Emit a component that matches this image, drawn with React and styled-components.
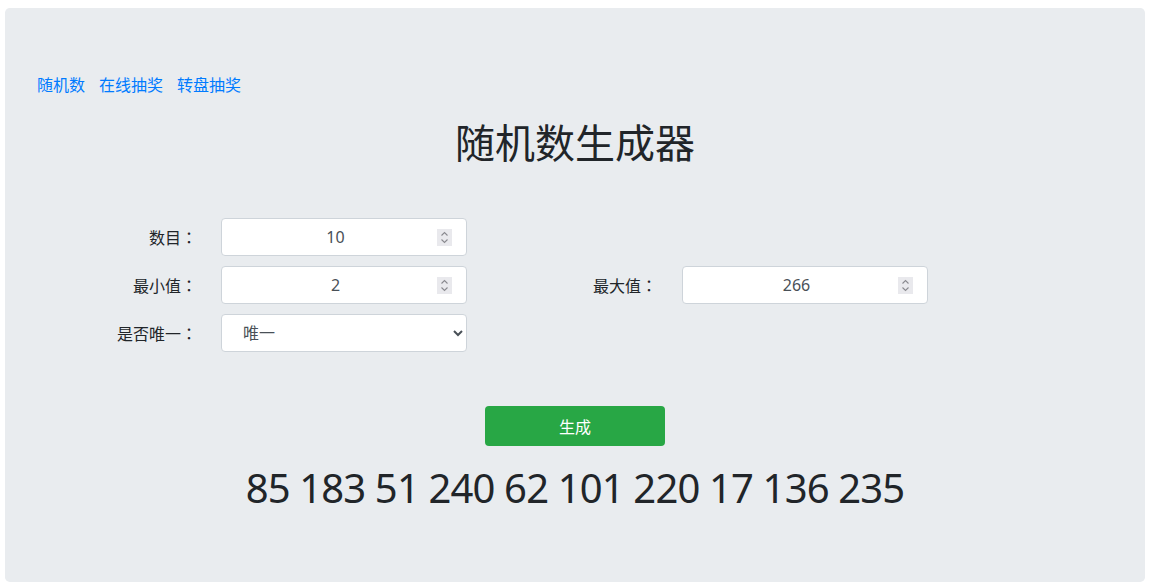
import React from "react";
import styled, { createGlobalStyle } from "styled-components";

const Global = createGlobalStyle`
  html, body { margin: 0; padding: 0; background: #fff; }
  body {
    font-family: "Noto Sans", "Noto Sans CJK SC", sans-serif;
    font-size: 16px;
    line-height: 1.5;
    color: #212529;
  }
  * { box-sizing: border-box; }
`;

const Page = styled.div`
  padding: 8px 5px 6px;
`;

const Jumbotron = styled.div`
  background: #e9ecef;
  border-radius: 4.8px;
  padding: 65px 32px 60px;
  height: 574px;
`;

const Nav = styled.nav`
  display: flex;
  gap: 14px;
  height: 24px;
`;

const NavLink = styled.a`
  color: #007bff;
  text-decoration: none;
  font-size: 16px;
  line-height: 24px;
`;

const Title = styled.h1`
  margin: 22px 0 51px;
  text-align: center;
  font-size: 40px;
  font-weight: 400;
  line-height: 48px;
`;

const Form = styled.div`
  display: flex;
  flex-direction: column;
  gap: 10px;
`;

const Row = styled.div`
  display: flex;
  gap: 30px;
  height: 38px;
`;

const Field = styled.div`
  display: flex;
  align-items: center;
`;

const Label = styled.label`
  width: 160px;
  text-align: right;
  margin-right: ${(p) => p.$gap || 24}px;
  font-size: 16px;
  color: #212529;
`;

const Colon = styled.span`
  font-family: "Noto Sans CJK TC", "Noto Sans CJK SC", sans-serif;
`;

const Box = styled.div`
  width: 246px;
  height: 38px;
  border: 1px solid #ced4da;
  border-radius: 4px;
  background: #fff;
  display: flex;
  align-items: center;
  padding: 0 14px 0 12px;
`;

const NumberField = styled.input`
  flex: 1;
  min-width: 0;
  height: 100%;
  border: none;
  outline: none;
  background: transparent;
  padding: 0;
  text-align: center;
  font-family: "Noto Sans", "Noto Sans CJK SC", sans-serif;
  font-size: 16px;
  color: #495057;
  appearance: textfield;
  -moz-appearance: textfield;
  &::-webkit-inner-spin-button,
  &::-webkit-outer-spin-button {
    -webkit-appearance: none;
    margin: 0;
  }
`;

const Spinner = styled.span`
  flex: none;
  width: 15px;
  height: 17px;
  background: #e9e9ed;
  display: flex;
  align-items: center;
  justify-content: center;
`;

const Select = styled.select`
  width: 246px;
  height: 38px;
  border: 1px solid #ced4da;
  border-radius: 4px;
  background: #fff;
  font-family: "Noto Sans", "Noto Sans CJK SC", sans-serif;
  font-size: 16px;
  color: #495057;
  outline: none;
  padding: 6px 8px 6px 17px;
`;

const ButtonWrap = styled.div`
  display: flex;
  justify-content: center;
  margin-top: 54px;
`;

const GenButton = styled.button`
  width: 180px;
  height: 40px;
  border: none;
  border-radius: 4px;
  background: #28a745;
  color: #fff;
  font-family: "Noto Sans", "Noto Sans CJK SC", sans-serif;
  font-size: 16px;
  cursor: pointer;
`;

const Result = styled.h1`
  margin: 18px 0 0;
  text-align: center;
  font-size: 40px;
  font-weight: 400;
  line-height: 48px;
  letter-spacing: -0.85px;
  color: #212529;
`;

function NumberInput({ value }) {
  return (
    <Box>
      <NumberField type="number" defaultValue={value} />
      <Spinner>
        <svg width="9" height="13" viewBox="0 0 9 13" fill="none">
          <path d="M1.5 4.5 L4.5 1.5 L7.5 4.5" stroke="#8a8a8f" strokeWidth="1.1" />
          <path d="M1.5 8.5 L4.5 11.5 L7.5 8.5" stroke="#8a8a8f" strokeWidth="1.1" />
        </svg>
      </Spinner>
    </Box>
  );
}

export default function App() {
  return (
    <>
      <Global />
      <Page>
        <Jumbotron>
          <Nav>
            <NavLink href="#">随机数</NavLink>
            <NavLink href="#">在线抽奖</NavLink>
            <NavLink href="#">转盘抽奖</NavLink>
          </Nav>
          <Title>随机数生成器</Title>
          <Form>
            <Row>
              <Field>
                <Label>数目<Colon>：</Colon></Label>
                <NumberInput value="10" />
              </Field>
            </Row>
            <Row>
              <Field>
                <Label>最小值<Colon>：</Colon></Label>
                <NumberInput value="2" />
              </Field>
              <Field>
                <Label $gap={25}>最大值<Colon>：</Colon></Label>
                <NumberInput value="266" />
              </Field>
            </Row>
            <Row>
              <Field>
                <Label>是否唯一<Colon>：</Colon></Label>
                <Select defaultValue="1">
                  <option value="1">唯一</option>
                  <option value="0">不唯一</option>
                </Select>
              </Field>
            </Row>
          </Form>
          <ButtonWrap>
            <GenButton>生成</GenButton>
          </ButtonWrap>
          <Result>85 183 51 240 62 101 220 17 136 235</Result>
        </Jumbotron>
      </Page>
    </>
  );
}
